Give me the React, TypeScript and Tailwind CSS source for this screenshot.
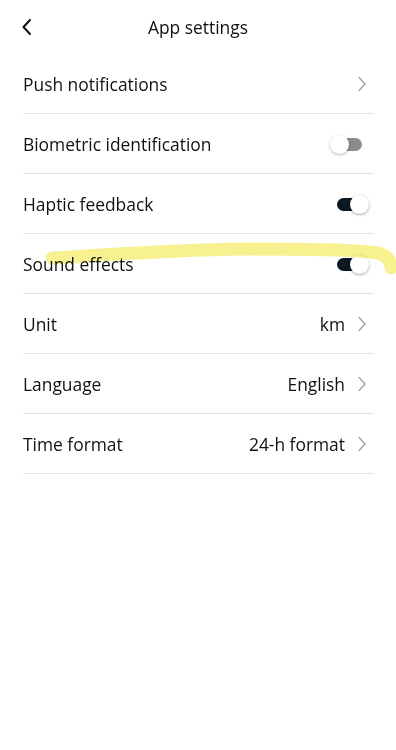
import React from "react";

type Row =
  | { label: string; kind: "link"; value?: string }
  | { label: string; kind: "toggle"; on: boolean };

const rows: Row[] = [
  { label: "Push notifications", kind: "link" },
  { label: "Biometric identification", kind: "toggle", on: false },
  { label: "Haptic feedback", kind: "toggle", on: true },
  { label: "Sound effects", kind: "toggle", on: true },
  { label: "Unit", kind: "link", value: "km" },
  { label: "Language", kind: "link", value: "English" },
  { label: "Time format", kind: "link", value: "24-h format" },
];

function Chevron() {
  return (
    <svg width="10" height="16" viewBox="0 0 10 16" className="ml-3">
      <path d="M2 1.5 L8 8 L2 14.5" fill="none" stroke="#a3a3a3" strokeWidth="1.4" strokeLinecap="round" strokeLinejoin="round" />
    </svg>
  );
}

function Toggle({ on }: { on: boolean }) {
  if (on) {
    return (
      <div className="relative w-[32px] h-[20px] mr-[4px]">
        <div className="absolute left-[0px] top-[4px] w-[22px] h-[13px] rounded-full bg-[#0c1822]" />
        <div className="absolute right-0 top-[1px] w-[19px] h-[19px] rounded-full bg-white shadow-[0_1px_3px_rgba(0,0,0,0.35)]" />
      </div>
    );
  }
  return (
    <div className="relative w-[33px] h-[20px] mr-[10px]">
      <div className="absolute right-[1px] top-[4px] w-[24px] h-[13px] rounded-full bg-[#8c8c8c]" />
      <div className="absolute left-0 top-[1px] w-[19px] h-[19px] rounded-full bg-white shadow-[0_1px_3px_rgba(0,0,0,0.3)]" />
    </div>
  );
}

export default function App() {
  return (
    <div className="relative w-[396px] h-[750px] bg-white text-[#111] font-['Open_Sans',Roboto,sans-serif]">
      <header className="relative h-[54px] flex items-center justify-center">
        <button className="absolute left-[20px] top-[18px]">
          <svg width="14" height="18" viewBox="0 0 14 18">
            <path d="M10 2 L3.5 9 L10 16" fill="none" stroke="#111" strokeWidth="2" strokeLinecap="round" strokeLinejoin="round" />
          </svg>
        </button>
        <h1 className="text-[17.4px] leading-none text-[#111] translate-y-[1px]">App settings</h1>
      </header>

      <ul className="mx-[23px]">
        {rows.map((r) => (
          <li key={r.label} className="h-[60px] flex items-center justify-between border-b border-[#e2e2e2]">
            <span className="text-[17.4px] leading-none text-[#111] translate-y-[1px]">{r.label}</span>
            {r.kind === "link" ? (
              <div className="flex items-center pr-[6px]">
                {r.value && <span className="text-[17.4px] leading-none text-[#111] translate-y-[1px]">{r.value}</span>}
                <Chevron />
              </div>
            ) : (
              <Toggle on={r.on} />
            )}
          </li>
        ))}
      </ul>

      {/* highlighter annotation */}
      <svg className="absolute left-0 top-[238px] pointer-events-none mix-blend-multiply" width="396" height="40" viewBox="0 0 396 40">
        <path
          d="M52 20 C 120 16, 190 11, 250 11 C 310 11, 360 12, 378 15 C 388 18, 391 24, 391 30"
          fill="none"
          stroke="#f6ef7c"
          strokeOpacity="0.85"
          strokeWidth="13"
          strokeLinecap="round"
        />
      </svg>
    </div>
  );
}
